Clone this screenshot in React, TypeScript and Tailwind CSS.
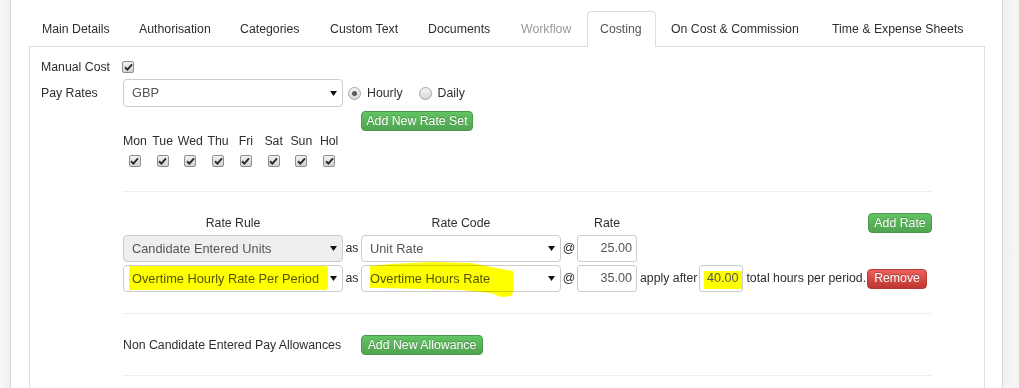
import React from "react";

const tabs = [
  { t: "Main Details", w: "w-[95px]" },
  { t: "Authorisation", w: "w-[99px]" },
  { t: "Categories", w: "w-[88px]" },
  { t: "Custom Text", w: "w-[96px]" },
  { t: "Documents", w: "w-[91px]" },
  { t: "Workflow", w: "w-[77px]" },
  { t: "Costing", w: "w-[69px]" },
  { t: "On Cost & Commission", w: "w-[159px]" },
  { t: "Time & Expense Sheets", w: "w-[145px]" },
];

const days = ["Mon", "Tue", "Wed", "Thu", "Fri", "Sat", "Sun", "Hol"];

function Check() {
  return (
    <span className="flex h-[12px] w-[12px] items-center justify-center rounded-[2px] border border-[#8e8e8e] bg-linear-to-b from-[#f2f2f2] to-[#d2d2d2]">
      <svg width="9" height="8" viewBox="0 0 9 8">
        <path d="M1 4.3 L3.4 6.6 L8 1.3" fill="none" stroke="#2a2a2a" strokeWidth="1.9" />
      </svg>
    </span>
  );
}

function Radio({ on }: { on?: boolean }) {
  return (
    <span className="flex h-[13px] w-[13px] items-center justify-center rounded-full border border-[#a6a6a6] bg-linear-to-b from-[#f6f6f6] to-[#d6d6d6]">
      {on && <span className="h-[5px] w-[5px] rounded-full bg-[#5a5a5a]" />}
    </span>
  );
}

function Select({
  w,
  text,
  gray,
  children,
}: {
  w: string;
  text: string;
  gray?: boolean;
  children?: React.ReactNode;
}) {
  return (
    <div
      className={`relative flex h-full items-center rounded-[4px] border border-[#ccc] pl-[8px] pr-[5px] ${
        gray ? "bg-[#eee]" : "bg-white"
      } ${w}`}
    >
      <span className="flex-1 truncate text-[12.8px] text-[#555]">{text}</span>
      <svg width="7" height="5" viewBox="0 0 7 5">
        <path d="M0 0H7L3.5 5Z" fill="#111" />
      </svg>
      {children}
    </div>
  );
}

function Btn({
  children,
  red,
  w,
}: {
  children: React.ReactNode;
  red?: boolean;
  w: string;
}) {
  return (
    <button
      className={`flex h-[20px] shrink-0 items-center justify-center rounded-[4px] border text-[12.3px] text-white [text-shadow:0_-1px_0_rgba(0,0,0,0.25)] ${
        red
          ? "border-[#b53a35] bg-linear-to-b from-[#ee5f5b] to-[#bd362f]"
          : "border-[#4a994a] bg-linear-to-b from-[#62c462] to-[#51a351]"
      } ${w}`}
    >
      {children}
    </button>
  );
}

export default function App() {
  return (
    <div className="flex h-[388px] w-[1019px] overflow-hidden bg-white font-['Liberation_Sans',Arial,sans-serif] text-[12.3px] text-[#2e2e2e]">
      <div className="w-[11px] shrink-0 border-r border-[#dadada] bg-linear-to-r from-[#f8f8f8] to-[#efefef]" />

      <div className="flex flex-1 flex-col pl-[18px] pr-[17px] pt-[11px]">
        <ul className="flex border-b border-[#ddd]">
          {tabs.map(({ t, w }) => (
            <li key={t} className="-mb-px mr-[2px]">
              <a
                className={`block whitespace-nowrap rounded-t-[4px] border pl-[12px] py-[8px] leading-[18px] ${w} ${
                  t === "Costing"
                    ? "border-[#ddd] border-b-white bg-white text-[#555]"
                    : "border-transparent"
                } ${t === "Workflow" ? "text-[#999]" : ""}`}
              >
                {t}
              </a>
            </li>
          ))}
        </ul>

        <div className="h-[400px] shrink-0 border-x border-b border-[#ddd] pl-[11px]">
          {/* manual cost */}
          <div className="mt-[12px] flex h-[16px] items-center">
            <div className="w-[82px]">Manual Cost</div>
            <div className="-ml-px">
              <Check />
            </div>
          </div>

          {/* pay rates */}
          <div className="mt-[4px] flex h-[28px] items-center">
            <div className="w-[82px]">Pay Rates</div>
            <Select w="w-[220px]" text="GBP" />
            <div className="ml-[5px]">
              <Radio on />
            </div>
            <span className="ml-[6px]">Hourly</span>
            <div className="ml-[16px]">
              <Radio />
            </div>
            <span className="ml-[6px]">Daily</span>
          </div>

          <div className="ml-[82px] w-[809px]">
            <div className="mt-[4px] flex pl-[238px]">
              <Btn w="w-[112px]">Add New Rate Set</Btn>
            </div>

            <div className="-ml-[2px] mt-[3px] grid grid-cols-[repeat(8,27.75px)]">
              {days.map((d) => (
                <div key={d} className="flex flex-col items-center">
                  <span className="h-[14px] leading-[14px]">{d}</span>
                  <div className="mt-[7px]">
                    <Check />
                  </div>
                </div>
              ))}
            </div>

            <div className="mt-[24px] border-t border-[#eee]" />

            {/* rate table */}
            <div className="mt-[21px] flex h-[20px] items-center">
              <div className="w-[220px] text-center">Rate Rule</div>
              <div className="w-[18px]" />
              <div className="w-[200px] text-center">Rate Code</div>
              <div className="w-[16px]" />
              <div className="w-[60px] text-center">Rate</div>
              <div className="ml-auto">
                <Btn w="w-[64px]">Add Rate</Btn>
              </div>
            </div>

            <div className="mt-[2px] flex h-[27px] items-center">
              <Select w="w-[220px]" text="Candidate Entered Units" gray />
              <div className="w-[18px] text-center">as</div>
              <Select w="w-[200px]" text="Unit Rate" />
              <div className="w-[16px] text-center">@</div>
              <div className="flex h-full w-[60px] items-center justify-end rounded-[3px] border border-[#ccc] pr-[4px] text-[12.6px] text-[#555]">
                25.00
              </div>
            </div>

            <div className="mt-[3px] flex h-[27px] items-center">
              <Select w="w-[220px]" text="Overtime Hourly Rate Per Period">
                <div className="pointer-events-none absolute left-[5px] top-0 h-[24px] w-[199px] rounded-r-[3px] bg-[#ffff00] mix-blend-multiply" />
              </Select>
              <div className="w-[18px] text-center">as</div>
              <Select w="w-[200px]" text="Overtime Hours Rate">
                <svg
                  className="pointer-events-none absolute left-[-1px] top-[-1px] overflow-visible mix-blend-multiply"
                  width="200"
                  height="27"
                >
                  <path
                    d="M9 1 L30 -1 L70 -3 L110 -2 L135 3 L152 6 L153 20 L151 31 L140 32 L130 28 L100 25 L60 24 L20 23 L9 23 Z"
                    fill="#ffff00"
                  />
                </svg>
              </Select>
              <div className="w-[16px] text-center">@</div>
              <div className="flex h-full w-[60px] items-center justify-end rounded-[3px] border border-[#ccc] pr-[4px] text-[12.6px] text-[#555]">
                35.00
              </div>
              <span className="ml-[3px]">apply after</span>
              <div className="relative ml-[2px] flex h-full w-[44px] items-center justify-end rounded-[3px] border border-[#ccc] pr-[4px] text-[12.6px] text-[#555]">
                <div className="pointer-events-none absolute left-[4px] top-[5px] h-[18px] w-[38px] bg-[#ffff00] mix-blend-multiply" />
                <span className="relative">40.00</span>
              </div>
              <span className="ml-[3px] whitespace-nowrap">total hours per period.</span>
              <div className="ml-[1px]">
                <Btn red w="w-[60px]">
                  Remove
                </Btn>
              </div>
            </div>

            <div className="mt-[21px] border-t border-[#eee]" />

            <div className="mt-[21px] flex h-[20px] items-center">
              <div className="w-[238px]">Non Candidate Entered Pay Allowances</div>
              <Btn w="w-[122px]">Add New Allowance</Btn>
            </div>

            <div className="mt-[20px] border-t border-[#eee]" />
          </div>
        </div>
      </div>

      <div className="w-[17px] shrink-0 border-l border-[#d6d6d6] bg-linear-to-r from-[#f1f1f1] to-[#f6f6f6]" />
    </div>
  );
}
